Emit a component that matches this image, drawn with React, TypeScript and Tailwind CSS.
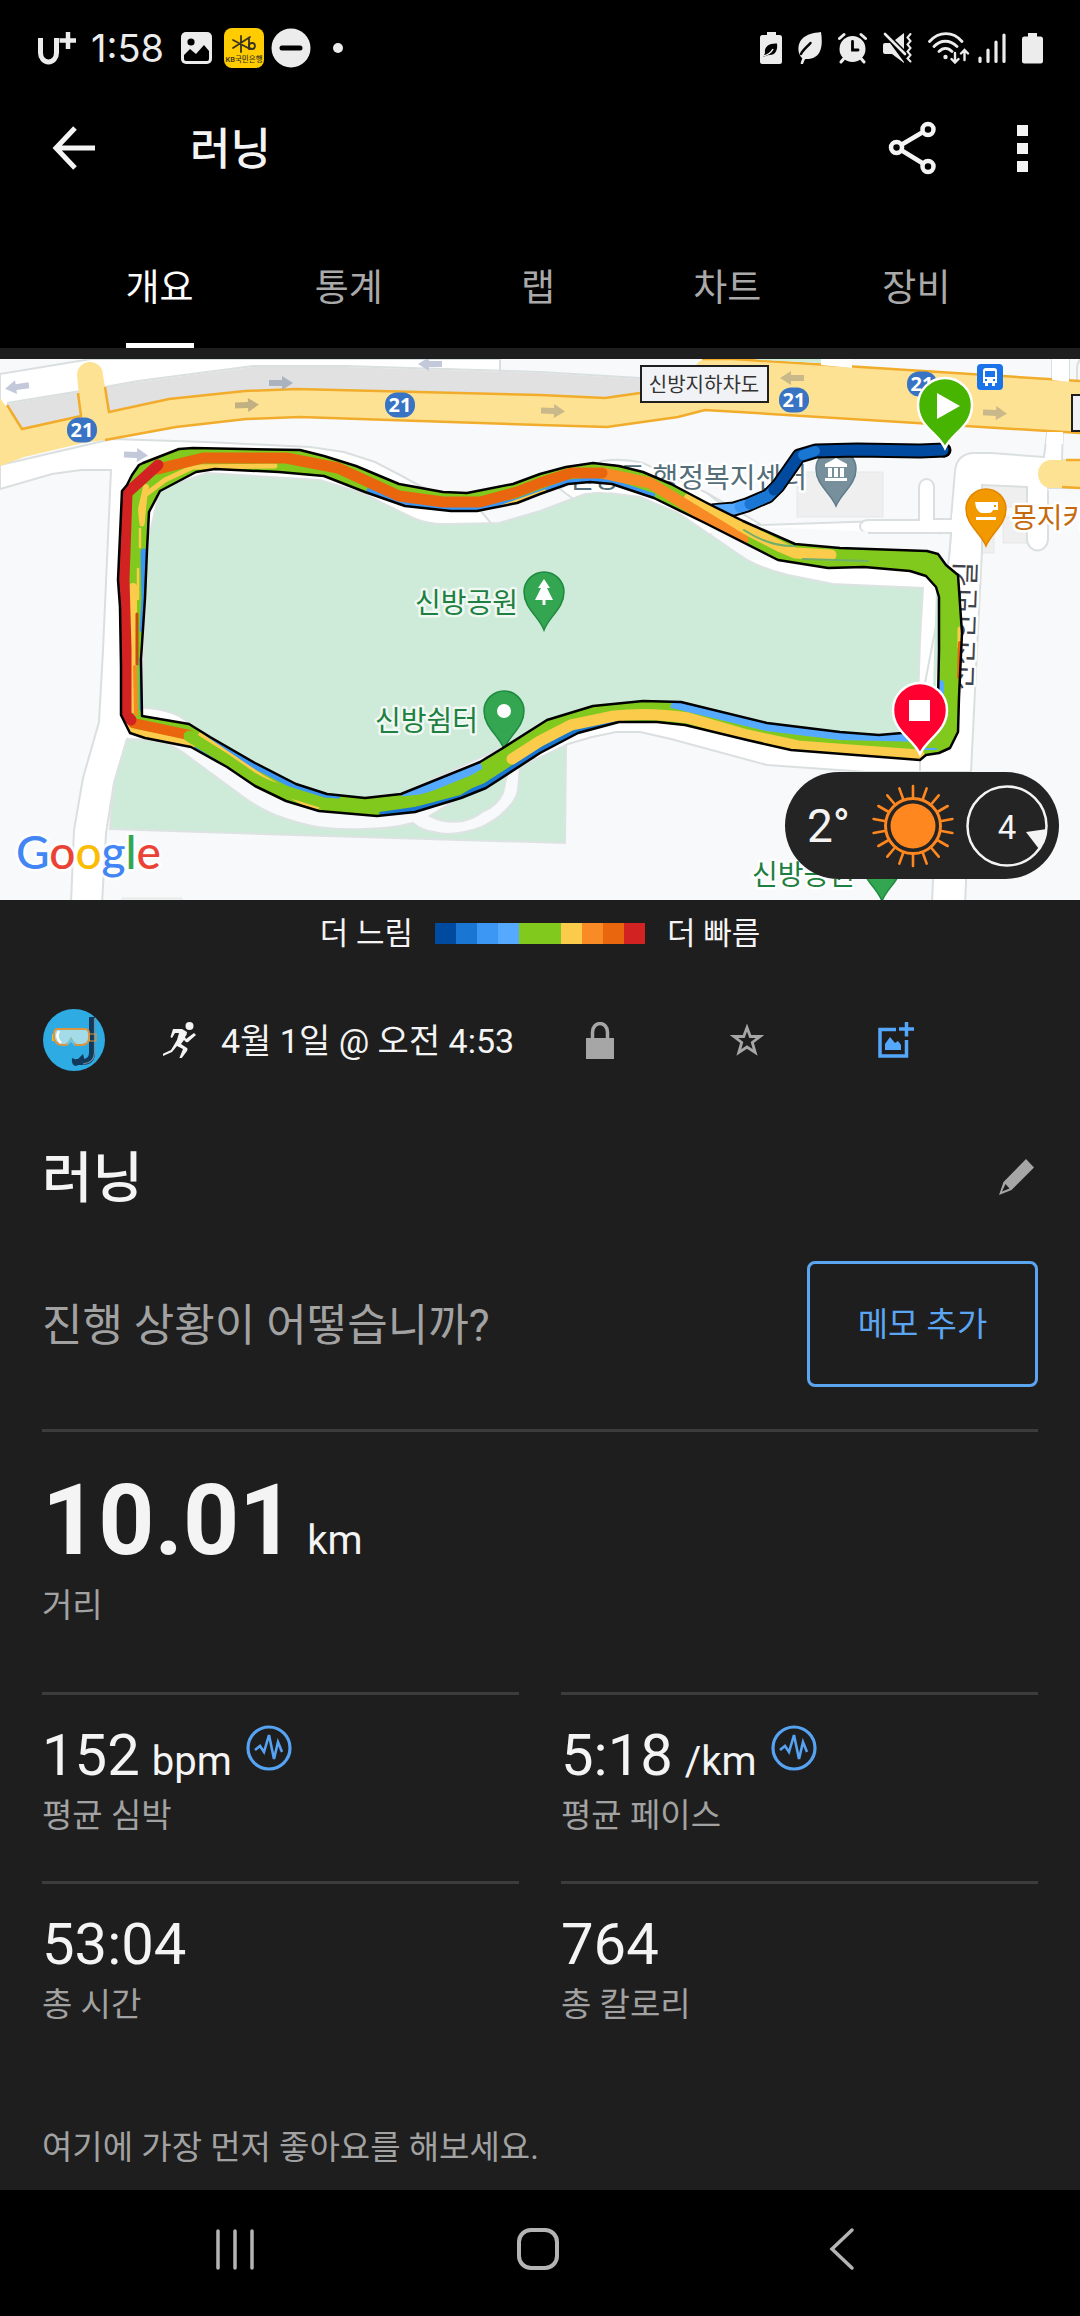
import type React from "react"

const TABS = ["개요", "통계", "랩", "차트", "장비"]

const PACE_COLORS = [
  "bg-[#004ba0]",
  "bg-[#1976d2]",
  "bg-[#3b97f3]",
  "bg-[#55aaff]",
  "bg-[#82c91e]",
  "bg-[#82c91e]",
  "bg-[#fbcb4b]",
  "bg-[#f98b27]",
  "bg-[#e9660f]",
  "bg-[#d32222]",
]

interface Stat {
  value: string
  unit?: string
  label: string
  chart?: boolean
}

const STATS: Stat[] = [
  { value: "152", unit: "bpm", label: "평균 심박", chart: true },
  { value: "5:18", unit: "/km", label: "평균 페이스", chart: true },
  { value: "53:04", label: "총 시간" },
  { value: "764", label: "총 칼로리" },
]

function StatusBar() {
  return (
    <div className="flex h-24 items-center justify-between pl-9 pr-[37px] text-[#ececec]">
      <div className="flex items-center">
        <svg width="40" height="34" viewBox="0 0 40 34" fill="none" stroke="currentColor" aria-hidden="true">
          <path d="M4.500 7v15a8 9 0 0 0 16 0V7" strokeWidth="5" />
          <path d="M32 1v17M23.500 9.500h17" strokeWidth="4.500" />
        </svg>
        <span className="ml-[15px] font-[Inter] text-[38px] leading-10">1:58</span>
        <svg className="ml-[17px]" width="31" height="32" viewBox="0 0 31 32" aria-hidden="true">
          <rect width="31" height="32" rx="5" fill="currentColor" />
          <circle cx="10" cy="10" r="3.600" fill="#000" />
          <path d="M3 23l6-6 6 5 8-9 5 6v8a2 2 0 0 1-2 2H5a2 2 0 0 1-2-2z" fill="#000" />
        </svg>
        <svg className="ml-3" width="40" height="40" viewBox="0 0 40 40" aria-hidden="true">
          <rect width="40" height="40" rx="8" fill="#ffcc00" />
          <g fill="none" stroke="#3b3420" strokeWidth="1.800" strokeLinecap="round">
            <path d="M17 8v16M9 12l17 9M9 20L26 9M25 10v11" />
            <circle cx="28" cy="18" r="3" />
          </g>
          <text x="20" y="34" textAnchor="middle" fontSize="7.500" fontWeight="500" fill="#3b3420">KB국민은행</text>
        </svg>
        <svg className="ml-[7px]" width="40" height="40" viewBox="0 0 40 40" aria-hidden="true">
          <circle cx="20" cy="20" r="19.500" fill="currentColor" />
          <rect x="8.500" y="17.500" width="23" height="5" rx="2.500" fill="#000" />
        </svg>
        <span className="ml-[22px] size-[10px] rounded-full bg-[#ececec]" />
      </div>
      <div className="flex items-center gap-4">
        <svg width="22" height="32" viewBox="0 0 22 32" fill="currentColor" aria-hidden="true">
          <path d="M7 0h9v3h3.500A2.500 2.500 0 0 1 22 5.500v24a2.500 2.500 0 0 1-2.500 2.500h-17A2.500 2.500 0 0 1 0 29.500v-24A2.500 2.500 0 0 1 2.500 3H7z" />
          <path d="M5 21c-1-7 5-10 12-9.500 1 7-2 12-8 11.500l-2 .5-4 1.500z" fill="#000" />
          <path d="M3 24c5-1 8-3 10-7" fill="none" stroke="currentColor" strokeWidth="1.500" />
        </svg>
        <svg width="24" height="32" viewBox="0 0 24 32" aria-hidden="true">
          <path d="M23 0c2 13 1 27-15 27l-3 0C-1 23-1 12 4 7 9 2 15 1 23 0z" fill="currentColor" />
          <path d="M3 22C5 18 9 15 12.500 11" fill="none" stroke="#000" strokeWidth="2.500" strokeLinecap="round" />
          <path d="M4 31c1-4 2-5 4-7" fill="none" stroke="currentColor" strokeWidth="2.600" strokeLinecap="round" />
        </svg>
        <svg width="29" height="32" viewBox="0 0 29 32" fill="none" stroke="currentColor" strokeLinecap="round" aria-hidden="true">
          <circle cx="14.500" cy="17" r="13" fill="currentColor" stroke="none" />
          <path d="M1.500 6.500L6 2.500M27.500 6.500L23 2.500M5.500 27L3 30M23.500 27l2.500 3" strokeWidth="3" />
          <path d="M14.500 9.500v8.500h5.500" stroke="#000" strokeWidth="2.800" />
        </svg>
        <svg width="29" height="32" viewBox="0 0 29 32" fill="currentColor" aria-hidden="true">
          <path d="M0 13q0-2 2-2h5l14 19v1L9 22H2q-2 0-2-2zM12 8l9-7v16z" />
          <path d="M2 2l20 22" stroke="#000" strokeWidth="4" />
          <path d="M2 2l20 20" stroke="currentColor" strokeWidth="2.600" strokeLinecap="round" />
          <path d="M27.500 2l-3 3.500 3 3.500-3 3.500 3 3.500-3 3.500 3 3.500-3 3.500 3 3" fill="none" stroke="currentColor" strokeWidth="2" strokeLinecap="round" />
        </svg>
        <div className="flex items-center gap-2">
          <svg width="42" height="32" viewBox="0 0 42 32" fill="none" stroke="currentColor" strokeWidth="2.800" strokeLinecap="round" aria-hidden="true">
            <path d="M1.500 9.500C11-1 25-1 34 9.500M6 14.500c6.500-7 16-7 23 0M11 19.500c4-4 9-4 13 0" />
            <circle cx="17.500" cy="25" r="2.200" fill="currentColor" stroke="none" />
            <path d="M27 21v9M23.500 27l3.500 3.500 3.500-3.500M36.500 28v-9M33 21.500l3.500-3.500 3.500 3.500" strokeWidth="2.400" />
          </svg>
          <svg width="28" height="32" viewBox="0 0 28 32" stroke="currentColor" strokeWidth="3.200" strokeLinecap="round" aria-hidden="true">
            <path d="M2 26v3.500M10 18v11.500M18 10v19.500M26 3v26.500" />
          </svg>
        </div>
        <svg width="21" height="32" viewBox="0 0 21 32" fill="currentColor" aria-hidden="true">
          <path d="M6 1h9v3.500h3.500A2.500 2.500 0 0 1 21 7v22a2.500 2.500 0 0 1-2.500 2.500h-16A2.500 2.500 0 0 1 0 29V7a2.500 2.500 0 0 1 2.500-2.500H6z" />
        </svg>
      </div>
    </div>
  )
}

function AppBar() {
  return (
    <div className="flex h-[104px] items-center pl-[51px] pr-[52px] text-[#f4f4f4]">
      <button type="button" aria-label="뒤로">
        <svg width="46" height="46" viewBox="0 0 46 46" fill="none" stroke="currentColor" strokeWidth="5">
          <path d="M24 3L5 23l19 20M4 23h40" />
        </svg>
      </button>
      <h1 className="ml-[93px] flex-1 pt-1 text-[44px] font-medium leading-[60px]">러닝</h1>
      <button type="button" aria-label="공유" className="mr-20">
        <svg width="50" height="54" viewBox="0 0 50 54" fill="none" stroke="currentColor" strokeWidth="4.500">
          <circle cx="9.500" cy="26.500" r="5.500" />
          <circle cx="41" cy="8.500" r="5.500" />
          <circle cx="41" cy="45.500" r="5.500" />
          <path d="M14 24l22-13M14 29l22 13.500" />
        </svg>
      </button>
      <button type="button" aria-label="더보기" className="flex flex-col gap-[7px]">
        <span className="size-[11px] bg-current" />
        <span className="size-[11px] bg-current" />
        <span className="size-[11px] bg-current" />
      </button>
    </div>
  )
}

function Tabs() {
  return (
    <div role="tablist" className="flex h-[148px] pl-[65px] pr-[69px]">
      {TABS.map((tab, index) => (
        <button
          key={tab}
          type="button"
          role="tab"
          aria-selected={index === 0}
          className={`flex flex-1 items-end justify-center text-[37px] leading-10 ${index === 0 ? "text-white" : "text-[#a9a9a9]"}`}
        >
          <span className={`border-b-[5px] pb-[34px] ${index === 0 ? "border-white" : "border-transparent"}`}>{tab}</span>
        </button>
      ))}
    </div>
  )
}

interface PinProps {
  x: number
  y: number
  r: number
  tip: number
  fill: string
  stroke: string
  strokeWidth: number
  children?: React.ReactNode
}

// Teardrop marker: (x, y) is the centre of the head, tip the distance to the point
function Pin({ x, y, r, tip, fill, stroke, strokeWidth, children }: PinProps) {
  const d = `M0 ${tip}C${-r * 0.25} ${tip * 0.65} ${-r} ${r * 0.8} ${-r} 0A${r} ${r} 0 0 1 ${r} 0C${r} ${r * 0.8} ${r * 0.25} ${tip * 0.65} 0 ${tip}Z`
  return (
    <g transform={`translate(${x} ${y})`}>
      <path d={d} fill={fill} stroke={stroke} strokeWidth={strokeWidth} />
      {children}
    </g>
  )
}

const BADGES = [
  [82, 71],
  [400, 46],
  [794, 41],
  [922, 25],
]

const ARROWS = [
  { x: 17, y: 28, angle: 172, fill: "#c3c8da" },
  { x: 136, y: 96, angle: 2, fill: "#c3c8da" },
  { x: 430, y: 5, angle: 180, fill: "#c3c8da" },
  { x: 281, y: 24, angle: 0, fill: "#a9b2bd" },
  { x: 247, y: 46, angle: -2, fill: "#c1b182" },
  { x: 553, y: 52, angle: 2, fill: "#c8b88a" },
  { x: 792, y: 19, angle: 180, fill: "#c8b88a" },
  { x: 995, y: 54, angle: 3, fill: "#c8b88a" },
]

const LOOP_OUTER =
  "M122 132L127 126L132 116L139 106L143 104L179 90L193 89L300 91L324 97L356 107L399 125L443 133L467 134L513 125L540 115L566 108L593 104L619 107L643 113L671 125L707 144L743 162L795 185L840 189L927 192L938 195L946 206L958 216L962 274L959 338L958 373L950 389L939 394L926 396L920 401L791 391L747 381L685 366L657 363L619 363L578 374L540 394L486 429L461 439L415 453L377 457L319 452L286 442L255 427L227 408L191 388L145 379L130 374L121 356L121 308L120 248L118 221Z"
const LOOP_INNER =
  "M142 357L141 300L145 239L147 191L149 153L160 132L196 113L215 110L279 113L324 117L365 133L405 147L451 152L477 152L517 144L540 135L568 125L590 123L612 125L654 139L705 164L778 201L828 209L864 208L910 212L926 217L936 228L939 238L939 291L938 341L929 368L902 374L879 376L840 373L767 364L681 343L643 342L593 347L547 361L503 389L480 403L401 435L365 439L327 435L296 425L255 404L210 378L189 365Z"

function RouteMap() {
  return (
    <svg viewBox="0 0 1080 541" className="block w-full" role="img" aria-label="신방공원 러닝 경로">
      <defs>
        <clipPath id="loop">
          <path d={LOOP_OUTER + LOOP_INNER} clipRule="evenodd" />
        </clipPath>
      </defs>
      <rect width="1080" height="541" fill="#f8f9fb" />

      {/* buildings */}
      <g fill="#efefef" stroke="#e6e7e8">
        <path d="M797 113h86v45h-86zM984 126h52v22h-52zM1003 158h24v26h-24zM979 150h15v44h-15z" />
        <path d="M122 539h60v4h-60z" />
      </g>

      {/* side streets */}
      <g fill="#fff" stroke="#dadfe0" strokeWidth="2">
        <path d="M0 15L91 0H500V40L0 60z" />
        <path d="M0 130L52 115L81 111H111L103 291L99 363L83 419L74 471L71 545H102L106 474L114 424L127 380L540 400L568 385L592 378L616 373L640 373L671 380L767 406L867 413L971 413L965 545H932L940 340V160L500 175L480 151L420 127L400 116L375 103L344 93L310 88L207 83L112 80L0 106z" />
        <path d="M602 102Q622 99 643 104L707 134L760 165L640 190L560 130z" />
        <path d="M919 161V128a7.500 8 0 0 1 15 0V160H951L955 112Q957 94 975 94H991L1044 98L1048 66H1063L1062 101H1090V129H1036L1048 132V180a10 11 0 0 1-21 0V128L982 126L982 191L977 291L971 413H920V350L949 199L951 174H868a8 6.500 0 0 1 0-13z" />
        <path d="M1052 -4V30H1069V-4" />
        <path d="M1077 30V10q0-8 6-12" fill="none" />
      </g>
      <path d="M948 200L951 176L760 168L700 140L720 200L900 205z" fill="#f8f9fb" />
      <path d="M921 155h12v12h-12zM952 155h8v25h-8zM1030 122h17v14h-17z" fill="#fff" />
      <path d="M707 134L722 146M868 174h83l-2 25" fill="none" stroke="#dadfe0" strokeWidth="2" />

      {/* highway */}
      <g>
        <path d="M7 45L78 33L81 57L22 70z" fill="#e1e1e1" />
        <path d="M105 28L138 23L253 8L344 8L540 14L640 20L700 26L640 34L605 39L540 36L296 30L245 32L169 40L109 53z" fill="#e1e1e1" />
        <path d="M7 44L105 28L138 22L253 7L344 7L540 13L640 19" fill="none" stroke="#dadfe0" strokeWidth="2" />
        <path d="M0 39L22 70L81 57L77 16a13 13 0 0 1 26 0L109 53L169 40L245 32L296 30L540 36L605 39L640 34L700 18Q690 4 705 0H733L1080 22V74L705 51L678 58L607 68L540 66L300 58L246 60L176 68L112 80L83 84L24 98L0 107z" fill="#fee293" />
        <path d="M7 46L22 70L81 57L78 34M105 28L109 53L169 40L245 32L296 30L540 36L605 39L640 34M702 0H733L1080 22M1080 74L705 51L678 58L607 68L540 66L300 58L246 60L176 68L105 81" fill="none" stroke="#f1ac2b" strokeWidth="2.500" />
        <path d="M740 -2h81v6l-60-3z" fill="#ceead8" />
        <path d="M821 -2h31V9l-31-3z" fill="#fff" />
        <path d="M1052 -2h17V23l-17-2zM1047 73h16v12h-17z" fill="#fff" />
        <path d="M1090 101H1051a13 14 0 0 0 0 28H1090z" fill="#fee293" />
        <path d="M1066 101h14M1062 128l18 1" stroke="#f1ac2b" strokeWidth="2.500" />
      </g>

      {/* park */}
      <g fill="#ceead8" stroke="#dce3e2" strokeWidth="2">
        <path d="M146 191L160 130L207 114L320 121L362 134L413 159Q430 166 448 165L499 164L540 152L585 135Q597 133 609 134L640 138L678 154L747 201Q766 211 788 216L833 225L923 229L920 281L917 374L836 376L764 366L678 346L643 344L592 350L545 365L503 388L440 417L399 436L365 441L327 437L296 427L255 406L210 380L189 364Q178 355 169 353Q156 349 143 349z" />
        <path d="M127 381Q150 379 165 384Q178 389 193 401L238 434Q256 448 275 456Q296 464 317 468Q340 471 362 470Q390 470 413 464Q422 472 434 473Q441 475 448 475Q466 474 482 468Q498 460 506 451Q517 440 518 431L520 408L566 386L565 484L293 476L110 470L114 424z" />
        <path d="M430 457Q446 465 463 462Q475 459 482 453Q497 447 503 434L508 412L470 432z" />
        <path d="M940 232L936 330H933L936 230z" stroke="none" />
      </g>

      {ARROWS.map(({ x, y, angle, fill }) => (
        <path key={`${x}-${y}`} d="M-12 -3H1V-7L12 0L1 7V3H-12z" fill={fill} transform={`translate(${x} ${y}) rotate(${angle})`} />
      ))}
      {BADGES.map(([x, y]) => (
        <g key={x}>
          <rect x={x - 15} y={y - 12.5} width="30" height="25" rx="12" fill="#3873c4" />
          <text x={x} y={y + 7} textAnchor="middle" fontSize="20" fontWeight="700" fill="#fff" className="font-['Open_Sans']">21</text>
        </g>
      ))}

      {/* place names */}
      <rect x="641" y="7" width="127" height="36" fill="#f1f2f5" stroke="#1f1f1f" strokeWidth="2" />
      <text x="704" y="33" textAnchor="middle" fontSize="20" fill="#333">신방지하차도</text>
      <rect x="1072" y="36" width="30" height="36" fill="#f1f2f5" stroke="#1f1f1f" strokeWidth="2" />
      <g fontSize="28" stroke="#fff" strokeWidth="5" strokeLinejoin="round" className="[paint-order:stroke]">
        <text x="518" y="254" textAnchor="end" fill="#1e8040" strokeOpacity="0.7">신방공원</text>
        <text x="478" y="372" textAnchor="end" fill="#1e8040" strokeOpacity="0.7">신방쉼터</text>
        <text x="855" y="526" textAnchor="end" fill="#1e8040">신방공원</text>
        <text x="807" y="129" textAnchor="end" fill="#546e7a">신방동 행정복지센터</text>
        <text x="1011" y="169" fill="#c5690f">몽지카</text>
        <text textAnchor="end" fill="#3f444c" transform="translate(976 203) rotate(-88)">신산안번길</text>
      </g>
      <Pin x={544} y={233} r={20} tip={38} fill="#34a550" stroke="#1e8a40" strokeWidth={1.5}>
        <path d="M0 -13L6 -4H3L9 8H1.500V13H-1.500V8H-9L-3 -4H-6z" fill="#fff" />
      </Pin>
      <Pin x={504} y={352} r={20} tip={38} fill="#34a550" stroke="#1e8a40" strokeWidth={1.5}>
        <circle r="7" fill="#fff" />
      </Pin>
      <Pin x={882} y={504} r={20} tip={38} fill="#34a550" stroke="#1e8a40" strokeWidth={1.5} />
      <Pin x={836} y={110} r={20} tip={37} fill="#78909c" stroke="#607d8b" strokeWidth={1.5}>
        <path d="M-11 -5L0 -11L11 -5V-2H-11zM-8 -1h4v9h-4zM-2 -1h4v9h-4zM4 -1h4v9H4zM-11 9h22v3h-22z" fill="#fff" />
      </Pin>
      <Pin x={986} y={150} r={20} tip={37} fill="#f29900" stroke="#e08600" strokeWidth={1.5}>
        <path d="M-11 -7H12V1H7Q6 4 3 4H-5Q-10 2 -11 -7zM8 -4V-2H10V-4zM-10 8H10V11H-10z" fill="#fff" fillRule="evenodd" />
      </Pin>
      <rect x="977" y="5" width="26" height="26" rx="4" fill="#1a73e8" />
      <path d="M983 12q0-3 3-3h8q3 0 3 3v12h-2v3h-3v-3h-4v3h-3v-3h-2zM985 12v6h10v-6zM985 20v2h2v-2zM993 20v2h2v-2z" fill="#fff" fillRule="evenodd" />

      {/* spur from the start point */}
      <g fill="none" strokeLinejoin="round">
        <path d="M945 91L920 92L857 91L816 92L799 97L778 127L768 137L747 146L734 150L712 152" stroke="#000" strokeWidth="15" />
        <circle cx="944" cy="91" r="7.500" fill="#000" />
        <path d="M747 146L734 150L706 152" stroke="#55aaff" strokeWidth="11" />
        <g strokeLinecap="round">
          <path d="M768 137L747 146L740 148" stroke="#3b97f3" strokeWidth="11" />
          <path d="M778 127L768 137L750 145" stroke="#1976d2" strokeWidth="11" />
          <path d="M943 91L920 92L857 91L816 92L799 97L778 127L774 131" stroke="#004ba0" strokeWidth="11" />
          <path d="M815 92L803 96" stroke="#1976d2" strokeWidth="10" />
        </g>
      </g>

      {/* laps, coloured by pace */}
      <g clipPath="url(#loop)" fill="none" strokeLinecap="round" strokeLinejoin="round">
        <rect width="1080" height="541" fill="#82c91e" />
        <path d="M366 133L405 147L451 152L477 152L517 144L568 125L590 123L612 125L654 139" stroke="#3b97f3" strokeWidth="9" strokeLinecap="butt" />
        <path d="M500 148L545 132" stroke="#fbcb4b" strokeWidth="3" />
        <path d="M144 193L145 239L143 270" stroke="#3b97f3" strokeWidth="7" />
        <path d="M142 300V350" stroke="#3b97f3" strokeWidth="5" />
        <path d="M206 374L255 404L296 425L340 438" stroke="#3b97f3" strokeWidth="11" strokeLinecap="butt" />
        <path d="M401 435L480 403" stroke="#55aaff" strokeWidth="18" strokeLinecap="butt" />
        <path d="M380 458L415 453L461 439L486 429L540 394L578 374L619 363" stroke="#1976d2" strokeWidth="10" strokeLinecap="butt" />
        <path d="M150 381L191 389L232 412" stroke="#3b97f3" strokeWidth="6" />
        <path d="M672 342L767 365L840 374L925 376" stroke="#55aaff" strokeWidth="14" strokeLinecap="butt" />
        <path d="M940 325V350" stroke="#55aaff" strokeWidth="8" />
        <path d="M922 390h14" stroke="#55aaff" strokeWidth="2" />
        <path d="M960 270V288" stroke="#fbcb4b" strokeWidth="5" />
        <path d="M960 284L959 318" stroke="#e9660f" strokeWidth="4" />
        <path d="M275 107L193 108L165 121L145 136L142 165" stroke="#fbcb4b" strokeWidth="5" />
        <path d="M146 128L141 150L142 162" stroke="#fbcb4b" strokeWidth="6" />
        <path d="M140 170V188M138 210V240" stroke="#fbcb4b" strokeWidth="2.500" />
        <path d="M133 228V350" stroke="#fbcb4b" strokeWidth="8" />
        <path d="M137 255V305" stroke="#c84a14" strokeWidth="3" />
        <path d="M135 308L136 355" stroke="#f98b27" strokeWidth="4" />
        <path d="M125 362L133 374L191 385" stroke="#fbcb4b" strokeWidth="9" />
        <path d="M198 376L260 418L318 451" stroke="#fbcb4b" strokeWidth="7" strokeLinecap="butt" />
        <path d="M189 377L227 401L250 417Q262 425 275 429L324 444L365 447L420 441L458 431L484 415L511 397" stroke="#82c91e" strokeWidth="11" />
        <path d="M702 147L748 171L781 188L795 194L831 196" stroke="#fbcb4b" strokeWidth="11" />
        <path d="M688 139L712 152" stroke="#fbcb4b" strokeWidth="8" />
        <path d="M744 171Q770 188 795 187M803 200L868 202" stroke="#6fb06a" strokeWidth="2" />
        <path d="M512 400L540 382L571 366L614 357Q650 353 688 359L747 376L798 387L850 391L919 396" stroke="#fbcb4b" strokeWidth="11" />
        <path d="M602 114L650 124L743 181" stroke="#f98b27" strokeWidth="11" />
        <path d="M158 110L203 99L286 99L338 109L399 137L443 143L480 143L517 133L540 124L571 114L602 114" stroke="#e9660f" strokeWidth="11" />
        <path d="M133 364L189 376" stroke="#e9660f" strokeWidth="10" />
        <path d="M189 377L194 380" stroke="#82c91e" strokeWidth="11" />
        <path d="M158 106L127 134L124 221L126 291V356L131 361" stroke="#d32222" strokeWidth="11" />
      </g>
      <g fill="none" stroke="#000" strokeWidth="2.500" strokeLinejoin="round">
        <path d={LOOP_OUTER} />
        <path d={LOOP_INNER} />
      </g>

      <Pin x={945} y={46} r={27} tip={43} fill="#46b400" stroke="#fff" strokeWidth={2.5}>
        <path d="M-8 -12L15 1L-8 14z" fill="#fff" />
      </Pin>
      <Pin x={920} y={351} r={27} tip={44} fill="#ff0030" stroke="#fff" strokeWidth={2.5}>
        <rect x="-11" y="-10" width="21" height="21" fill="#fff" />
      </Pin>

      <text x="16" y="510" fontSize="46" fontWeight="500" stroke="#fff" strokeWidth="6" strokeOpacity="0.7" strokeLinejoin="round" className="font-[Lato] [paint-order:stroke]">
        <tspan fill="#4285f4">G</tspan>
        <tspan fill="#ea4335">o</tspan>
        <tspan fill="#fbbc05">o</tspan>
        <tspan fill="#4285f4">g</tspan>
        <tspan fill="#34a853">l</tspan>
        <tspan fill="#ea4335">e</tspan>
      </text>
    </svg>
  )
}

function WeatherPill() {
  const rays = Array.from({ length: 18 }, (_, i) => i * 20)
  return (
    <div className="absolute bottom-[21px] right-[21px] flex h-[107px] items-center rounded-full bg-[#242424] pl-[22px] pr-[11px] text-[#f4f4f4]">
      <span className="text-[46px] leading-none">2°</span>
      <svg className="ml-[22px]" width="82" height="84" viewBox="-41 -42 82 84" fill="none" stroke="#ff871f" aria-hidden="true">
        <circle r="22.500" fill="#ff871f" stroke="none" />
        <circle r="27.500" strokeWidth="3" />
        {rays.map((angle) => (
          <path key={angle} d="M0 -29V-40" strokeWidth="2.600" strokeLinecap="round" transform={`rotate(${angle})`} />
        ))}
      </svg>
      <svg className="ml-3" width="82" height="84" viewBox="-41 -42 82 84" aria-label="바람 4">
        <circle r="39.500" fill="none" stroke="#f4f4f4" strokeWidth="2.500" />
        <path d="M19 6L40 3L39 12L32 23z" fill="#f4f4f4" />
        <text x="0" y="13" textAnchor="middle" fontSize="33" fill="#f4f4f4">4</text>
      </svg>
    </div>
  )
}

function Avatar() {
  return (
    <svg width="62" height="62" viewBox="0 0 62 62" aria-hidden="true">
      <circle cx="31" cy="31" r="31" fill="#2dabe2" />
      <path d="M49 8V44Q49 53 39 53H33" fill="none" stroke="#12395a" strokeWidth="6" />
      <path d="M29 49l5 2 6-6 2 8-9 4q-5-1-4-8z" fill="#12395a" />
      <path d="M51.500 9V44Q51 54 40 55" fill="none" stroke="#6f8ba0" strokeWidth="1.200" />
      <path d="M45 25h8v7h-8z" fill="none" stroke="#d9953f" strokeWidth="1.200" />
      <path d="M9 25h3v7H9zM44 25h3v7h-3z" fill="#f5b92e" />
      <path d="M15 20H42Q46 20 46 25V30Q45 36 38 36H34Q31 36 28 30Q25 36 22 36H19Q12 35 11 29V24Q11 20 15 20z" fill="#a4dbe8" stroke="#d9953f" strokeWidth="2" />
      <path d="M16 22Q12 28 18 34" fill="none" stroke="#fff" strokeWidth="2.500" />
      <path d="M24 37q1-6 4-8q3 2 4 8l-4-4z" fill="#6cc6e4" />
    </svg>
  )
}

function ActivityMeta() {
  return (
    <div className="mt-[42px] flex h-[62px] items-center pl-px">
      <Avatar />
      <svg className="ml-[58px]" width="34" height="36" viewBox="0 0 34 36" fill="currentColor" aria-hidden="true">
        <circle cx="26.500" cy="4" r="4" />
        <path d="M10 7h9l5 3q0 3-2 5l1 2 8-6 2 2-8 7q-2 1-3-1l-1-1-3 4 6 4q1 1 0 3l-6 8h-2l4-10-6-3-5 6-9 4-.5-2L8 28l6-10 2-7h-4l-3 5-1.500-1z" />
      </svg>
      <p className="ml-6 pt-[2px] text-[34px] leading-10">4월 1일 @ 오전 4:53</p>
      <button type="button" aria-label="비공개" className="ml-[72px] text-[#a6a6a6]">
        <svg width="28" height="37" viewBox="0 0 28 37">
          <path d="M0 16h28v21H0z" fill="currentColor" />
          <path d="M6.500 17V10a7.500 8.500 0 0 1 15 0v7" fill="none" stroke="currentColor" strokeWidth="3.500" />
        </svg>
      </button>
      <button type="button" aria-label="즐겨찾기" className="ml-[116px] text-[#a6a6a6]">
        <svg width="34" height="34" viewBox="0 0 34 34" fill="none" stroke="currentColor" strokeWidth="2.800">
          <path d="M17 4.500L20.300 13.500H30L22.300 19.500L25.200 29.500L17 24L8.800 29.500L11.700 19.500L4 13.500H13.700z" />
        </svg>
      </button>
      <button type="button" aria-label="사진 추가" className="ml-[114px] text-[#55a7fb]">
        <svg width="36" height="38" viewBox="0 0 36 38" fill="none" stroke="currentColor" strokeWidth="3.500">
          <path d="M18 8.500H2V35H28.500V19M28.500 1V15.500M21 8H36" />
          <path d="M7 23l5-7 5 6 3-2 3 4v5H7z" fill="currentColor" stroke="none" />
        </svg>
      </button>
    </div>
  )
}

function PulseIcon() {
  return (
    <svg width="46" height="46" viewBox="0 0 46 46" fill="none" stroke="#55a3f2" aria-hidden="true">
      <circle cx="23" cy="23" r="21" strokeWidth="3.200" />
      <path d="M9 25l5-4 4 6 5-17 5 24 4-17 4 10" strokeWidth="2.600" />
    </svg>
  )
}

function StatCell({ value, unit, label, chart }: Stat) {
  return (
    <div className="border-t-[3px] border-[#3c3c3c] pb-[45px] pt-[30px]">
      <dd className="flex h-[60px] items-start">
        <span className="text-[58px] leading-[60px]">
          {value}
          {unit && <span className="ml-3 text-[40px] leading-none">{unit}</span>}
        </span>
        {chart && (
          <button type="button" aria-label={`${label} 차트`} className="ml-[14px]">
            <PulseIcon />
          </button>
        )}
      </dd>
      <dt className="mt-[11px] text-[33px] leading-10 text-[#a2a2a2]">{label}</dt>
    </div>
  )
}

function NavBar() {
  return (
    <nav className="mt-auto flex h-[126px] items-center justify-between bg-black pb-2 pl-[213px] pr-[217px] text-[#b4b4b4]">
      <button type="button" aria-label="최근 앱">
        <svg width="44" height="44" viewBox="0 0 44 44" stroke="currentColor" strokeWidth="3.500" strokeLinecap="round">
          <path d="M5 4v37M22 4v37M39 4v37" />
        </svg>
      </button>
      <button type="button" aria-label="홈">
        <svg width="44" height="44" viewBox="0 0 44 44" fill="none" stroke="currentColor" strokeWidth="4">
          <rect x="3" y="3" width="38" height="38" rx="12" />
        </svg>
      </button>
      <button type="button" aria-label="뒤로 가기">
        <svg width="44" height="44" viewBox="0 0 44 44" fill="none" stroke="currentColor" strokeWidth="3.500" strokeLinecap="round">
          <path d="M33 3L13 22l20 19" />
        </svg>
      </button>
    </nav>
  )
}

export default function App() {
  return (
    <div className="flex min-h-screen flex-col bg-[#1e1e1e] font-[Roboto,'Noto_Sans_CJK_KR',sans-serif] text-[#f4f4f4]">
      <header className="bg-black">
        <StatusBar />
        <AppBar />
        <Tabs />
      </header>

      <main>
        <section className="relative mt-[11px]">
          <RouteMap />
          <WeatherPill />
        </section>

        <div className="flex h-[67px] items-center justify-center gap-[22px] text-[31px] leading-10">
          <span>더 느림</span>
          <div className="flex">
            {PACE_COLORS.map((color, index) => (
              <span key={index} className={`h-[21px] w-[21px] ${color}`} />
            ))}
          </div>
          <span>더 빠름</span>
        </div>

        <section className="px-[42px]">
          <ActivityMeta />

          <div className="mt-[76px] flex h-[60px] items-center justify-between">
            <h2 className="pt-[2px] text-[55px] font-medium leading-[60px]">러닝</h2>
            <button type="button" aria-label="이름 편집" className="mr-1 text-[#a6a6a6]">
              <svg width="35" height="36" viewBox="0 0 35 36" fill="currentColor">
                <path d="M27 0l8 8.500L12.500 31 0 36 4.500 23zM6.500 25L3 32.500 10.500 29.500z" fillRule="evenodd" />
              </svg>
            </button>
          </div>

          <div className="mt-[54px] flex items-center justify-between">
            <p className="pt-1 text-[44px] leading-[60px] text-[#a2a2a2]">진행 상황이 어떻습니까?</p>
            <button type="button" className="h-[126px] w-[231px] rounded-lg border-[3px] border-[#5ba5f3] pt-[2px] text-[33px] leading-10 text-[#5ba5f3]">
              메모 추가
            </button>
          </div>

          <dl className="mt-[42px]">
            <div className="border-t-[3px] border-[#3c3c3c] pb-[66px] pt-[41px]">
              <dd className="text-[98px] font-bold leading-[96px]">
                10.01<span className="ml-3 text-[40px] font-normal leading-none">km</span>
              </dd>
              <dt className="mt-[17px] text-[33px] leading-10 text-[#a2a2a2]">거리</dt>
            </div>
            <div className="grid grid-cols-2 gap-x-[42px]">
              {STATS.map((stat) => (
                <StatCell key={stat.label} {...stat} />
              ))}
            </div>
          </dl>

          <p className="pb-[22px] pt-[58px] text-[33px] leading-10 text-[#a2a2a2]">여기에 가장 먼저 좋아요를 해보세요.</p>
        </section>
      </main>

      <NavBar />
    </div>
  )
}
